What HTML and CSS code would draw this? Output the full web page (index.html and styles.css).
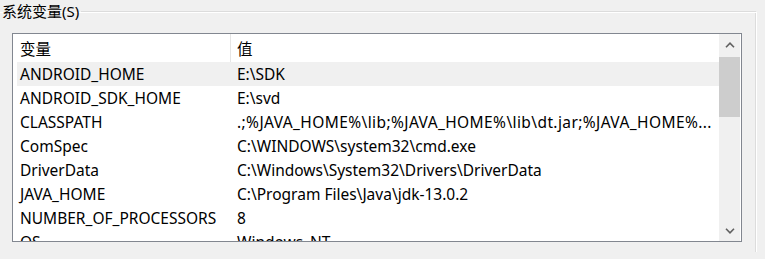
FILE: index.html
```html
<!DOCTYPE html>
<html lang="zh-CN">
<head>
    <meta charset="UTF-8">
    <title>系统变量</title>
    <link rel="stylesheet" href="styles.css">
</head>
<body>
    <fieldset class="group">
        <legend class="group-title">系统变量(S)</legend>

        <div class="listbox">
            <div class="list-body">
                <div class="list-header">
                    <div class="col-name">变量</div>
                    <div class="col-value">值</div>
                </div>

                <div class="row selected">
                    <div class="col-name">ANDROID_HOME</div>
                    <div class="col-value">E:\SDK</div>
                </div>
                <div class="row">
                    <div class="col-name">ANDROID_SDK_HOME</div>
                    <div class="col-value">E:\svd</div>
                </div>
                <div class="row">
                    <div class="col-name">CLASSPATH</div>
                    <div class="col-value wide">.;%JAVA_HOME%\lib;%JAVA_HOME%\lib\dt.jar;%JAVA_HOME%...</div>
                </div>
                <div class="row">
                    <div class="col-name">ComSpec</div>
                    <div class="col-value">C:\WINDOWS\system32\cmd.exe</div>
                </div>
                <div class="row">
                    <div class="col-name">DriverData</div>
                    <div class="col-value">C:\Windows\System32\Drivers\DriverData</div>
                </div>
                <div class="row">
                    <div class="col-name">JAVA_HOME</div>
                    <div class="col-value">C:\Program Files\Java\jdk-13.0.2</div>
                </div>
                <div class="row">
                    <div class="col-name">NUMBER_OF_PROCESSORS</div>
                    <div class="col-value">8</div>
                </div>
                <div class="row">
                    <div class="col-name">OS</div>
                    <div class="col-value">Windows_NT</div>
                </div>
            </div>

            <div class="scrollbar">
                <div class="scroll-btn">
                    <svg width="10" height="6" viewBox="0 0 10 6"><polyline points="1,5.2 5,1.2 9,5.2" fill="none" stroke="#606060" stroke-width="1.6"/></svg>
                </div>
                <div class="scroll-track">
                    <div class="scroll-thumb"></div>
                </div>
                <div class="scroll-btn">
                    <svg width="10" height="6" viewBox="0 0 10 6"><polyline points="1,0.8 5,4.8 9,0.8" fill="none" stroke="#606060" stroke-width="1.6"/></svg>
                </div>
            </div>
        </div>
    </fieldset>
</body>
</html>
```

FILE: styles.css
```css
body {
    margin: 0;
    height: 259px;
    overflow: hidden;
    background-color: #f0f0f0;
    font-family: "Noto Sans", "Noto Sans CJK SC", sans-serif;
    font-size: 15.5px;
    color: #000;
}

/* group box with etched top and right edges */
.group {
    margin: 2px 8px 0 0;
    padding: 0;
    border: 0;
    border-top: 1px solid #dcdcdc;
    border-right: 1px solid #fff;
    box-shadow: inset 0 1px 0 #fff, inset -1px 0 0 #dcdcdc;
    height: 250px;
    box-sizing: border-box;
}

.group-title {
    padding: 0 2px;
    line-height: 19px;
    font-size: 15px;
}

.listbox {
    display: flex;
    width: 730px;
    height: 209px;
    margin: 12px 0 0 12px;
    box-sizing: border-box;
    border: 1px solid #828790;
    background-color: #fff;
    overflow: hidden;
}

.list-body {
    flex: 1;
    padding-left: 4px;
}

.list-header {
    display: flex;
    height: 28px;
    align-items: center;
}

.list-header .col-name {
    width: 210px;
    align-self: stretch;
    display: flex;
    align-items: center;
    border-right: 1px solid #e5e5e5;
}

.row {
    display: flex;
    height: 24px;
    align-items: center;
    white-space: nowrap;
}

.row.selected {
    background-color: #f0f0f0;
}

.col-name {
    width: 210px;
    padding-left: 3px;
}

.row .col-name {
    width: 211px;
}

.col-value {
    padding-left: 6px;
}

.col-value.wide {
    letter-spacing: 0.4px;
}

.scrollbar {
    width: 21px;
    margin-right: 1px;
    display: flex;
    flex-direction: column;
    background-color: #f0f0f0;
}

.scroll-btn {
    height: 21px;
    display: flex;
    align-items: center;
    justify-content: center;
}

.scroll-track {
    flex: 1;
    padding-top: 2px;
}

.scroll-thumb {
    height: 60px;
    background-color: #cdcdcd;
}
```
